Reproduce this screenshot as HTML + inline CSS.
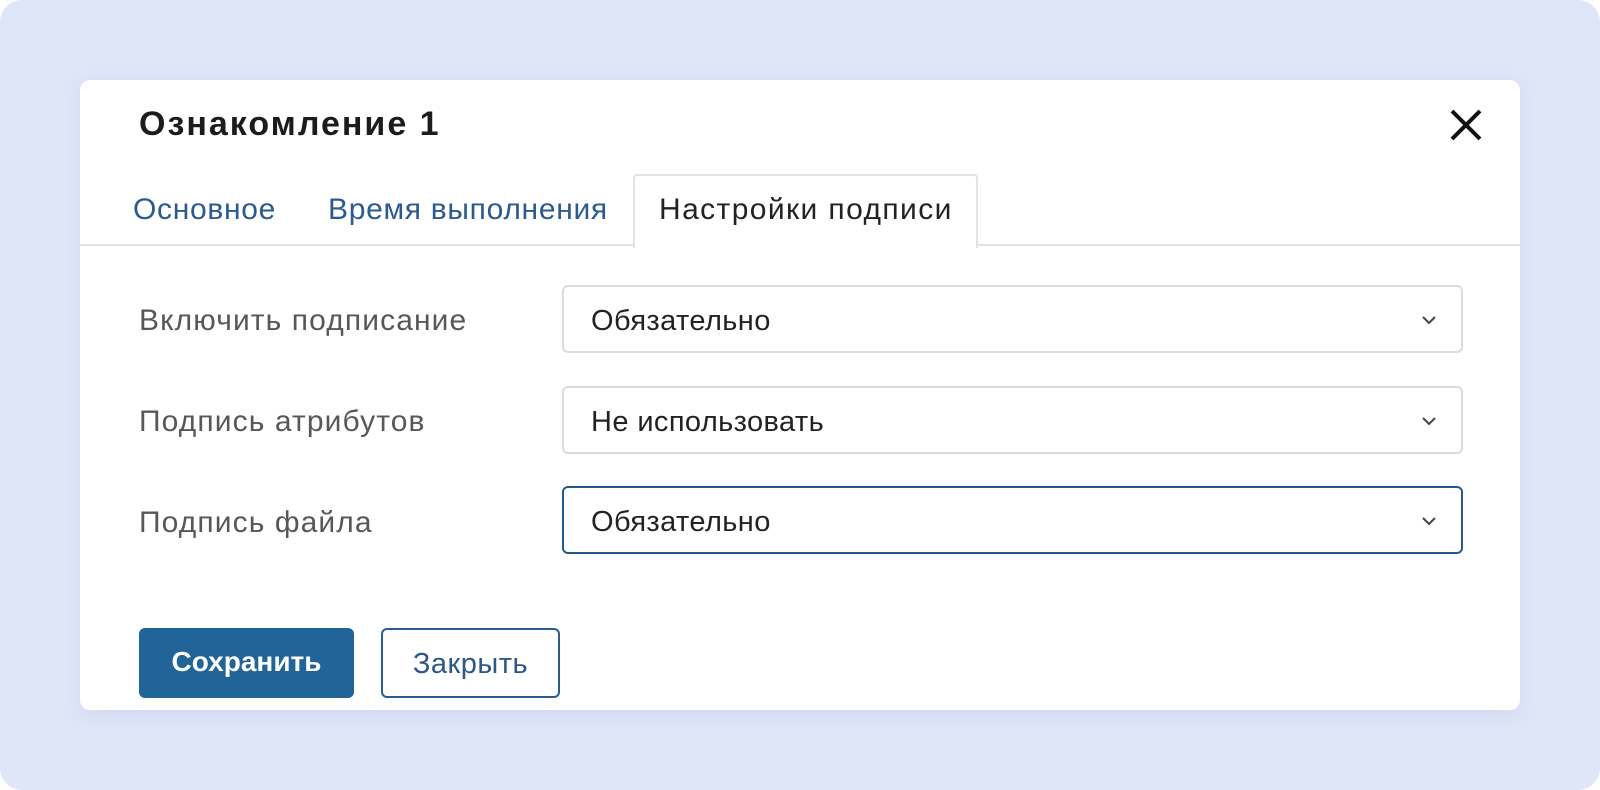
<!DOCTYPE html>
<html><head><meta charset="utf-8"><style>
html,body{margin:0;padding:0;background:#fff;}
body{width:1600px;height:790px;position:relative;overflow:hidden;font-family:"Liberation Sans",sans-serif;}
.bg{position:absolute;left:0;top:0;width:1600px;height:790px;background:#dfe6f8;border-radius:22px;}
.card{position:absolute;left:80px;top:80px;width:1440px;height:630px;background:#fff;border-radius:10px;box-shadow:0 4px 20px rgba(120,140,200,0.15);overflow:hidden;}
.title{position:absolute;left:59px;top:25px;font-size:34px;font-weight:bold;color:#1c1c1c;letter-spacing:2px;}
.x{position:absolute;left:1369px;top:28px;}
.tabline{position:absolute;left:0;top:164px;width:1440px;height:2px;background:#e3e3e3;}
.tab{position:absolute;top:113px;font-size:30px;color:#2a5a90;letter-spacing:0.7px;}
.active{position:absolute;left:553px;top:94px;width:341px;height:72px;border:2px solid #e3e3e3;border-bottom:none;background:#fff;border-radius:4px 4px 0 0;}
.label{position:absolute;left:59px;font-size:30px;color:#575757;letter-spacing:1.1px;}
.sel{position:absolute;left:482px;width:901px;height:68px;border:2px solid #dcdcdc;border-radius:6px;box-sizing:border-box;}
.sel span{position:absolute;left:27px;top:18px;font-size:29px;color:#222;letter-spacing:0.4px;}
.sel svg{position:absolute;right:24px;top:28px;}
.focus{border-color:#24598a;}
.btn{position:absolute;top:548px;height:70px;box-sizing:border-box;border-radius:6px;text-align:center;line-height:68px;}
</style></head><body>
<div class="bg"></div>
<div class="card">
 <div class="title">Ознакомление 1</div>
 <svg class="x" width="34" height="34" viewBox="0 0 34 34"><path d="M3 3L31 31M31 3L3 31" stroke="#111" stroke-width="4" fill="none"/></svg>
 <div class="tabline"></div>
 <div class="active"></div>
 <div class="tab" style="left:53px">Основное</div>
 <div class="tab" style="left:248px">Время выполнения</div>
 <div class="tab" style="left:579px;color:#222;letter-spacing:1.4px">Настройки подписи</div>

 <div class="label" style="top:224px">Включить подписание</div>
 <div class="sel" style="top:205px"><span>Обязательно</span><svg width="16" height="10" viewBox="0 0 16 10"><path d="M2 2L8 8L14 2" stroke="#444" stroke-width="2" fill="none"/></svg></div>
 <div class="label" style="top:325px">Подпись атрибутов</div>
 <div class="sel" style="top:306px"><span>Не использовать</span><svg width="16" height="10" viewBox="0 0 16 10"><path d="M2 2L8 8L14 2" stroke="#444" stroke-width="2" fill="none"/></svg></div>
 <div class="label" style="top:426px">Подпись файла</div>
 <div class="sel focus" style="top:406px"><span>Обязательно</span><svg width="16" height="10" viewBox="0 0 16 10"><path d="M2 2L8 8L14 2" stroke="#444" stroke-width="2" fill="none"/></svg></div>

 <div class="btn" style="left:59px;width:215px;background:#216497;color:#fff;font-weight:bold;font-size:28px;">Сохранить</div>
 <div class="btn" style="left:301px;width:179px;border:2px solid #2a5d8f;color:#2d5788;font-size:29px;letter-spacing:0.5px;">Закрыть</div>
</div>
</body></html>
